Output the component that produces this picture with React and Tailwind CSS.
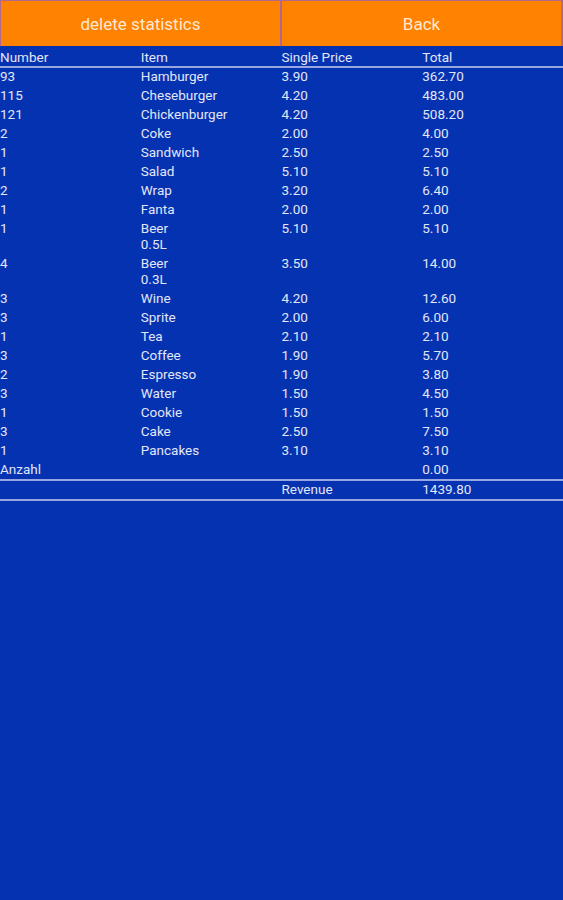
import React from "react";

const rows = [
  ["93", "Hamburger", "3.90", "362.70"],
  ["115", "Cheseburger", "4.20", "483.00"],
  ["121", "Chickenburger", "4.20", "508.20"],
  ["2", "Coke", "2.00", "4.00"],
  ["1", "Sandwich", "2.50", "2.50"],
  ["1", "Salad", "5.10", "5.10"],
  ["2", "Wrap", "3.20", "6.40"],
  ["1", "Fanta", "2.00", "2.00"],
  ["1", "Beer\n0.5L", "5.10", "5.10"],
  ["4", "Beer\n0.3L", "3.50", "14.00"],
  ["3", "Wine", "4.20", "12.60"],
  ["3", "Sprite", "2.00", "6.00"],
  ["1", "Tea", "2.10", "2.10"],
  ["3", "Coffee", "1.90", "5.70"],
  ["2", "Espresso", "1.90", "3.80"],
  ["3", "Water", "1.50", "4.50"],
  ["1", "Cookie", "1.50", "1.50"],
  ["3", "Cake", "2.50", "7.50"],
  ["1", "Pancakes", "3.10", "3.10"],
  ["Anzahl", "", "", "0.00"],
];

function Row({ cells, className = "" }) {
  return (
    <div className={"grid grid-cols-4 leading-[16px] " + className}>
      {cells.map((c, i) => (
        <div key={i} className="whitespace-pre-line">
          {c}
        </div>
      ))}
    </div>
  );
}

export default function App() {
  return (
    <div
      className="w-[563px] h-[900px] bg-[#0432b1] text-[#e3e6f6] text-[13.5px] overflow-hidden"
      style={{ fontFamily: "Roboto, 'Liberation Sans', sans-serif" }}
    >
      <div className="flex h-[46px] bg-[#b0688c] pt-[1px] pl-[1px] pr-[2px] gap-[2px]">
        <button className="flex-1 bg-[#ff8200] text-[#ffe8d2] text-[17px] flex items-center justify-center pt-[2px]">
          delete statistics
        </button>
        <button className="flex-1 bg-[#ff8200] text-[#ffe8d2] text-[17px] flex items-center justify-center pt-[2px]">
          Back
        </button>
      </div>
      <Row
        cells={["Number", "Item", "Single Price", "Total"]}
        className="pt-[3px] pb-[1px] border-b-2 border-[#98a6e2]"
      />
      {rows.map((r, i) => {
        const last = i === rows.length - 1;
        return (
          <Row
            key={i}
            cells={r}
            className={
              last ? "pb-[2px] border-b-2 border-[#98a6e2]" : "pb-[3px]"
            }
          />
        );
      })}
      <Row
        cells={["", "", "Revenue", "1439.80"]}
        className="pb-[2px] border-b-2 border-[#98a6e2]"
      />
    </div>
  );
}
